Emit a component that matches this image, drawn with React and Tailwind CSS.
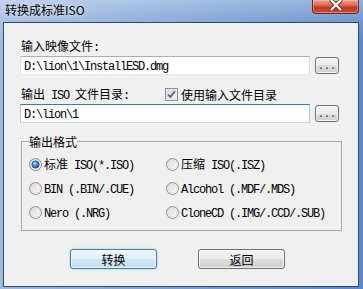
import React from "react";

const CJK = /([\u3000-\u303f\u4e00-\u9fff\uff00-\uffef]+)/;

function T({ children, className = "" }) {
  const parts = String(children).split(CJK).filter((p) => p !== "");
  return (
    <span className={"whitespace-pre " + className}>
      {parts.map((p, i) =>
        /[\u3000-\u303f\u4e00-\u9fff\uff00-\uffef]/.test(p) ? (
          <span key={i} className="font-['Noto_Sans_CJK_SC',sans-serif] text-[12px]">
            {p}
          </span>
        ) : (
          <span key={i} className="font-['Liberation_Mono',monospace] text-[12px] tracking-[-1.2px]">
            {p}
          </span>
        )
      )}
    </span>
  );
}

function Radio({ checked, id }) {
  return (
    <svg width="13" height="13" viewBox="0 0 13 13" className="shrink-0">
      <defs>
        <linearGradient id={"rg" + id} x1="0" y1="0" x2="1" y2="1">
          <stop offset="0" stopColor="#d4d4d4" />
          <stop offset="1" stopColor="#ffffff" />
        </linearGradient>
        <radialGradient id={"rb" + id} cx="0.4" cy="0.35" r="0.7">
          <stop offset="0" stopColor="#b6e8ff" />
          <stop offset="0.45" stopColor="#3f8fcf" />
          <stop offset="1" stopColor="#174f86" />
        </radialGradient>
      </defs>
      <circle cx="6.5" cy="6.5" r="6" fill={"url(#rg" + id + ")"} stroke="#8e8f8f" strokeWidth="1" />
      <circle cx="6.5" cy="6.5" r="4.5" fill="none" stroke="#e4e4e4" strokeWidth="1" />
      {checked && <circle cx="6.5" cy="6.5" r="3.6" fill={"url(#rb" + id + ")"} stroke="#1d4f80" strokeWidth="0.8" />}
    </svg>
  );
}

function Checkbox() {
  return (
    <svg width="13" height="13" viewBox="0 0 13 13" className="shrink-0">
      <defs>
        <linearGradient id="cbg" x1="0" y1="0" x2="1" y2="1">
          <stop offset="0" stopColor="#d8d8d8" />
          <stop offset="1" stopColor="#fbfbfb" />
        </linearGradient>
      </defs>
      <rect x="0.5" y="0.5" width="12" height="12" fill="#f4f4f4" stroke="#8e8f8f" />
      <rect x="2" y="2" width="9" height="9" fill="url(#cbg)" stroke="#c8c8c8" strokeWidth="0.6" />
      <path d="M3.2 6.6 L5.4 9 L9.9 3.2" fill="none" stroke="#4a5f95" strokeWidth="1.8" strokeLinejoin="round" />
    </svg>
  );
}

function DotsButton() {
  return (
    <div className="w-[24px] h-[17px] ml-[5px] rounded-[3px] border border-[#707070] bg-[linear-gradient(to_bottom,#f2f2f2_0%,#ebebeb_50%,#dddddd_50%,#cfcfcf_100%)] shadow-[inset_0_0_0_1px_rgba(255,255,255,0.7)] flex justify-center items-end pb-[1px]">
      <span className="font-['Liberation_Mono',monospace] text-[10px] leading-[10px] text-[#222] tracking-[0px]">...</span>
    </div>
  );
}

function Field({ value, focused }) {
  return (
    <div
      className={
        "w-[290px] h-[19px] bg-white border pl-[3px] flex items-center leading-[14px] text-black " +
        (focused
          ? "border-t-[#3d7bad] border-l-[#a4c9e3] border-r-[#a4c9e3] border-b-[#b7d9ed]"
          : "border-t-[#abadb3] border-l-[#e2e3ea] border-r-[#dbdfe6] border-b-[#e3e9ef]")
      }
    >
      <T>{value}</T>
    </div>
  );
}

export default function App() {
  const rows = [
    ["标准 ISO(*.ISO)", true, "压缩 ISO(.ISZ)"],
    ["BIN (.BIN/.CUE)", false, "Alcohol (.MDF/.MDS)"],
    ["Nero (.NRG)", false, "CloneCD (.IMG/.CCD/.SUB)"],
  ];
  return (
    <div className="w-[363px] h-[289px] overflow-hidden flex flex-col bg-[linear-gradient(to_bottom,rgba(255,255,255,0.35)_0px,rgba(255,255,255,0.12)_22px,rgba(255,255,255,0)_40px),linear-gradient(to_right,#9fbae2,#7ca2d6_45%,#5a89c9_100%)]">
      {/* title bar */}
      <div className="h-[22px] flex items-start shrink-0">
        <div className="pl-[5px] pt-[1px] leading-[17px] text-[12px] text-black font-['Noto_Sans_CJK_SC',sans-serif] [text-shadow:0_0_6px_rgba(255,255,255,0.9)]">
          转换成标准ISO
        </div>
        <div className="ml-auto mr-[4px] w-[47px] h-[14px] rounded-b-[4px] border border-t-0 border-[#6b2a1f] bg-[linear-gradient(to_bottom,#e7a494_0%,#d86b55_40%,#c23b22_55%,#cc4a2f_100%)] shadow-[inset_0_0_0_1px_rgba(255,200,190,0.45)] flex justify-center">
          <svg width="14" height="11" viewBox="0 0 14 11">
            <path d="M2.5 0.5 L11.5 9.5 M11.5 0.5 L2.5 9.5" stroke="#4a1a12" strokeWidth="4" strokeLinecap="round" opacity="0.75" />
            <path d="M2.5 0.5 L11.5 9.5 M11.5 0.5 L2.5 9.5" stroke="#ffffff" strokeWidth="2.2" strokeLinecap="round" />
          </svg>
        </div>
      </div>

      {/* client */}
      <div className="ml-[3px] w-[356px] h-[265px] shrink-0 border border-[#34486a] bg-[#f0f0f0] flex flex-col pl-[16px] pt-[15px] text-black">
        <div className="ml-[1px] h-[14px] leading-[14px]">
          <T>输入映像文件:</T>
        </div>
        <div className="mt-[4px] flex items-center">
          <Field value={"D:\\lion\\1\\InstallESD.dmg"} />
          <DotsButton />
        </div>

        <div className="mt-[12px] ml-[1px] h-[14px] leading-[14px] flex items-center">
          <div className="w-[144px]">
            <T>输出 ISO 文件目录:</T>
          </div>
          <Checkbox />
          <div className="ml-[3px]">
            <T>使用输入文件目录</T>
          </div>
        </div>
        <div className="mt-[3px] flex items-center">
          <Field value={"D:\\lion\\1"} focused />
          <DotsButton />
        </div>

        <fieldset className="mt-[11px] ml-[1px] w-[321px] border border-[#a9a9a9] pl-[7px] pt-[4px] pb-[6px]">
          <legend className="leading-[14px] h-[14px]">
            <T>输出格式</T>
          </legend>
          <div className="grid grid-cols-[137px_1fr]">
            {rows.map(([a, ca, b], i) => (
              <React.Fragment key={i}>
                <div className="h-[24px] flex items-center gap-[2px] leading-[14px]">
                  <Radio checked={ca} id={"a" + i} />
                  <T>{a}</T>
                </div>
                <div className="h-[24px] flex items-center gap-[2px] leading-[14px]">
                  <Radio checked={false} id={"b" + i} />
                  <T>{b}</T>
                </div>
              </React.Fragment>
            ))}
          </div>
        </fieldset>

        <div className="mt-[18px] ml-[50px] flex gap-[41px]">
          <div className="w-[87px] h-[20px] rounded-[3px] border border-[#3c7fb1] bg-[linear-gradient(to_bottom,#eef7fd_0%,#e1f0fa_50%,#cfe7f5_50%,#c3e0f1_100%)] shadow-[inset_0_0_0_1px_rgba(255,255,255,0.6),0_0_2px_rgba(60,160,230,0.6)] flex items-center justify-center leading-[14px]">
            <T>转换</T>
          </div>
          <div className="w-[87px] h-[20px] rounded-[3px] border border-[#707070] bg-[linear-gradient(to_bottom,#f2f2f2_0%,#ebebeb_50%,#dddddd_50%,#cfcfcf_100%)] shadow-[inset_0_0_0_1px_rgba(255,255,255,0.7)] flex items-center justify-center leading-[14px]">
            <T>返回</T>
          </div>
        </div>
      </div>
    </div>
  );
}
